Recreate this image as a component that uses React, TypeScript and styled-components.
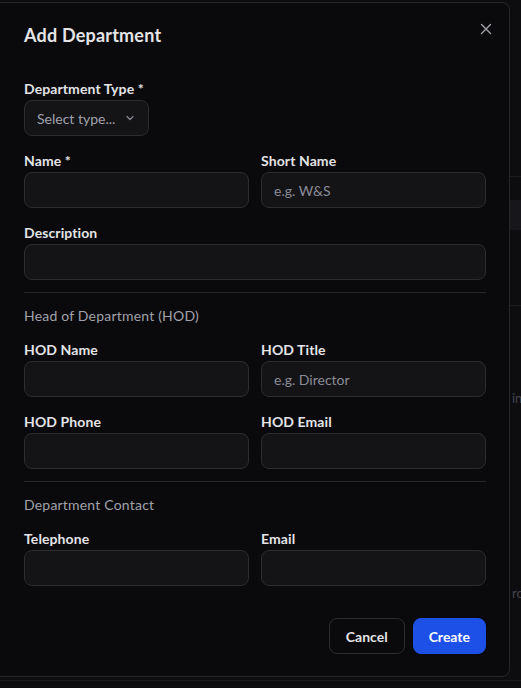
import styled, { createGlobalStyle } from 'styled-components';

const GlobalStyle = createGlobalStyle`
    html, body {
        margin: 0;
        padding: 0;
        background: #0d0d10;
        font-family: Lato, "Noto Sans", sans-serif;
    }
    * {
        box-sizing: border-box;
    }
`;

type FieldDef = { label: string; placeholder?: string };

const Field = ({ label, placeholder }: FieldDef) => (
    <StyledField>
        <StyledLabel>{label}</StyledLabel>
        <StyledInput placeholder={placeholder} />
    </StyledField>
);

const App = () => {
    return (
        <StyledPage>
            <GlobalStyle />
            <StyledBackdropRows>
                <StyledBgRow top={176} />
                <StyledBgBlock top={200} height={30} />
                <StyledBgRow top={305} />
                <StyledBgText top={390}>in</StyledBgText>
                <StyledBgText top={585}>ro</StyledBgText>
                <StyledBgRow top={680} />
            </StyledBackdropRows>
            <StyledDialog>
                <StyledCloseButton aria-label="Close">
                    <svg width="12" height="12" viewBox="0 0 12 12" fill="none">
                        <path d="M1.5 1.5l9 9M10.5 1.5l-9 9" stroke="#a1a1aa" strokeWidth="1.4" strokeLinecap="round" />
                    </svg>
                </StyledCloseButton>
                <StyledTitle>Add Department</StyledTitle>

                <StyledForm>
                    <StyledField>
                        <StyledLabel>Department Type *</StyledLabel>
                        <StyledSelect>
                            <span>Select type...</span>
                            <svg width="10" height="10" viewBox="0 0 10 10" fill="none">
                                <path d="M2 3.5l3 3 3-3" stroke="#8b8b94" strokeWidth="1.2" strokeLinecap="round" strokeLinejoin="round" />
                            </svg>
                        </StyledSelect>
                    </StyledField>
                    <StyledRow>
                        <Field label="Name *" />
                        <Field label="Short Name" placeholder="e.g. W&S" />
                    </StyledRow>
                    <Field label="Description" />
                </StyledForm>

                <StyledDivider />
                <StyledSection>
                    <StyledSectionTitle>Head of Department (HOD)</StyledSectionTitle>
                    <StyledForm>
                        <StyledRow>
                            <Field label="HOD Name" />
                            <Field label="HOD Title" placeholder="e.g. Director" />
                        </StyledRow>
                        <StyledRow>
                            <Field label="HOD Phone" />
                            <Field label="HOD Email" />
                        </StyledRow>
                    </StyledForm>
                </StyledSection>

                <StyledDivider />
                <StyledSection>
                    <StyledSectionTitle>Department Contact</StyledSectionTitle>
                    <StyledRow>
                        <Field label="Telephone" />
                        <Field label="Email" />
                    </StyledRow>
                </StyledSection>

                <StyledFooter>
                    <StyledButton variant="outline">Cancel</StyledButton>
                    <StyledButton variant="primary">Create</StyledButton>
                </StyledFooter>
            </StyledDialog>
        </StyledPage>
    );
};

const StyledPage = styled.div`
    position: relative;
    width: 521px;
    height: 688px;
    overflow: hidden;
    background: #0d0d10;
`;

const StyledBackdropRows = styled.div`
    position: absolute;
    inset: 0;
`;

const StyledBgRow = styled.div<{ top: number }>`
    position: absolute;
    left: 0;
    right: 0;
    top: ${({ top }) => top}px;
    height: 1px;
    background: #1c1c20;
`;

const StyledBgBlock = styled.div<{ top: number; height: number }>`
    position: absolute;
    left: 0;
    right: 0;
    top: ${({ top }) => top}px;
    height: ${({ height }) => height}px;
    background: #17171b;
`;

const StyledBgText = styled.div<{ top: number }>`
    position: absolute;
    left: 512px;
    top: ${({ top }) => top}px;
    font-size: 13px;
    color: #44444b;
`;

const StyledDialog = styled.div`
    position: absolute;
    left: -8px;
    top: 2px;
    width: 518px;
    height: 675px;
    display: flex;
    flex-direction: column;
    padding: 19px 23px 0 31px;
    background: #0a0a0c;
    border: 1px solid #27272a;
    border-radius: 8px;
`;

const StyledCloseButton = styled.button`
    position: absolute;
    top: 19px;
    right: 16px;
    width: 14px;
    height: 14px;
    padding: 0;
    display: flex;
    align-items: center;
    justify-content: center;
    background: transparent;
    border: none;
`;

const StyledTitle = styled.h2`
    margin: 0 0 34px;
    font-size: 18px;
    line-height: 26px;
    font-weight: 700;
    letter-spacing: 0.2px;
    color: #e4e4e7;
`;

const StyledForm = styled.div`
    display: flex;
    flex-direction: column;
    gap: 18px;
`;

const StyledRow = styled.div`
    display: grid;
    grid-template-columns: 1fr 1fr;
    column-gap: 12px;
`;

const StyledField = styled.div`
    display: flex;
    flex-direction: column;
    align-items: flex-start;
    gap: 4px;
`;

const StyledLabel = styled.label`
    font-size: 14px;
    line-height: 14px;
    font-weight: 700;
    letter-spacing: 0.1px;
    color: #e4e4e7;
`;

const StyledInput = styled.input`
    width: 100%;
    height: 36px;
    padding: 0 12px;
    font-family: Lato, "Noto Sans", sans-serif;
    font-size: 14px;
    color: #e4e4e7;
    background: #141417;
    border: 1px solid #2c2c31;
    border-radius: 8px;
    outline: none;
    &::placeholder {
        color: #8b8b94;
    }
`;

const StyledSelect = styled.button`
    display: flex;
    align-items: center;
    gap: 10px;
    height: 36px;
    padding: 0 13px 0 12px;
    font-family: Lato, "Noto Sans", sans-serif;
    font-size: 14px;
    color: #a1a1aa;
    background: #141417;
    border: 1px solid #2c2c31;
    border-radius: 8px;
`;

const StyledDivider = styled.div`
    height: 1px;
    margin-top: 12px;
    background: #27272a;
`;

const StyledSection = styled.div`
    display: flex;
    flex-direction: column;
    padding-top: 16px;
`;

const StyledSectionTitle = styled.div`
    margin-bottom: 20px;
    font-size: 14px;
    line-height: 14px;
    letter-spacing: 0.2px;
    color: #a1a1aa;
`;

const StyledFooter = styled.div`
    display: flex;
    justify-content: flex-end;
    gap: 8px;
    margin-top: 32px;
`;

const StyledButton = styled.button<{ variant: 'outline' | 'primary' }>`
    height: 36px;
    padding: 0 ${({ variant }) => (variant === 'primary' ? 15 : 16)}px;
    font-family: Lato, "Noto Sans", sans-serif;
    font-size: 14px;
    font-weight: 700;
    border-radius: 8px;
    color: ${({ variant }) => (variant === 'primary' ? '#ffffff' : '#e4e4e7')};
    background: ${({ variant }) => (variant === 'primary' ? '#1d50e6' : '#0a0a0c')};
    border: 1px solid ${({ variant }) => (variant === 'primary' ? '#1d50e6' : '#2c2c31')};
`;

export default App;
